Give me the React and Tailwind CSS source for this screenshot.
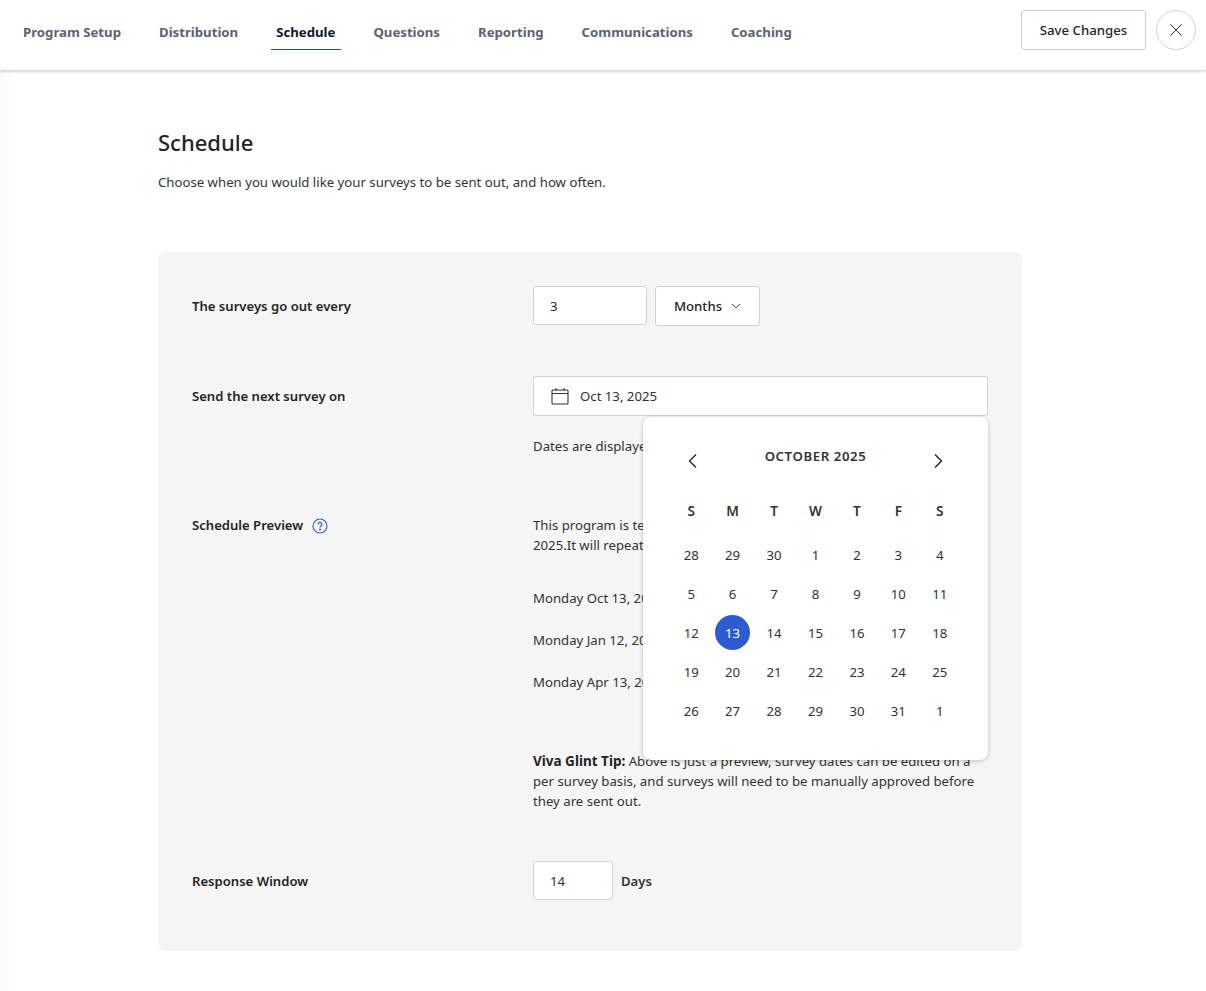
const tabs = ["Program Setup", "Distribution", "Schedule", "Questions", "Reporting", "Communications", "Coaching"];
const heads = ["S", "M", "T", "W", "T", "F", "S"];
const days = [28,29,30,1,2,3,4,5,6,7,8,9,10,11,12,13,14,15,16,17,18,19,20,21,22,23,24,25,26,27,28,29,30,31,1];

function Calendar() {
  return (
    <div className="absolute left-[110px] top-[41px] z-10 h-[343px] w-[345px] rounded-[8px] bg-white shadow-[0_1px_4px_rgba(0,0,0,0.22)]">
      <div className="flex items-start justify-between px-[44px] pt-[29px]">
        <svg width="12" height="16" viewBox="0 0 12 16" className="mt-[7px]" fill="none" stroke="#242424" strokeWidth="1.4"><path d="M9 1.5 2.5 8 9 14.5" /></svg>
        <div className="text-[13.2px] font-semibold leading-[20px] tracking-[0.6px] text-[#333]">OCTOBER 2025</div>
        <svg width="12" height="16" viewBox="0 0 12 16" className="mt-[7px]" fill="none" stroke="#242424" strokeWidth="1.4"><path d="M3 1.5 9.5 8 3 14.5" /></svg>
      </div>
      <div className="ml-[27.5px] mt-[28px] grid w-[290px] grid-cols-7">
        {heads.map((h, i) => (
          <div key={i} className="flex h-[28px] items-center justify-center text-[13.6px] font-semibold text-[#333]">{h}</div>
        ))}
      </div>
      <div className="ml-[27.5px] mt-[10px] grid w-[290px] grid-cols-7">
        {days.map((d, i) => (
          <div key={i} className="flex h-[39px] items-center justify-center">
            <span className={i === 15 ? "flex h-[35px] w-[35px] items-center justify-center rounded-full bg-[#2f5bd0] text-[13.2px] text-white" : "text-[13.2px] text-[#333]"}>{d}</span>
          </div>
        ))}
      </div>
    </div>
  );
}

export default function App() {
  return (
    <div className="relative min-h-[991px] bg-white text-[13.2px] leading-[20px] text-[#242424] font-['Noto_Sans','Open_Sans',sans-serif]">
      <div className="pointer-events-none absolute bottom-0 left-0 top-[70px] w-[16px] bg-gradient-to-r from-[#f9f9f9] to-transparent" />
      <header className="relative z-20 flex h-[70px] items-start justify-between bg-white pl-[23px] pr-[10px] pt-[10px] shadow-[0_1px_3px_rgba(0,0,0,0.25)]">
        <nav className="flex gap-[38px] pt-[12px]">
          {tabs.map((t) => (
            <div key={t} className={t === "Schedule" ? "relative text-[13.2px] font-bold text-[#111827]" : "text-[13.2px] font-bold text-[#5b6470]"}>
              {t}
              {t === "Schedule" && <span className="absolute -left-[5px] -right-[6px] top-[27px] h-px bg-[#1f4e8c]" />}
            </div>
          ))}
        </nav>
        <div className="flex items-center gap-[10px]">
          <button className="h-[40px] w-[125px] rounded-[3px] border border-[#cfcfcf] bg-white pb-[1px] text-[13.2px] font-medium text-[#242424]">Save Changes</button>
          <button className="flex h-[40px] w-[40px] items-center justify-center rounded-full border border-[#d1d1d1] bg-white">
            <svg width="14" height="14" viewBox="0 0 14 14" fill="none" stroke="#333" strokeWidth="1"><path d="M1.5 1.5l11 11M12.5 1.5l-11 11" /></svg>
          </button>
        </div>
      </header>

      <main className="relative ml-[158px] w-[864px] pt-[56px]">
        <h1 className="text-[22px] font-medium leading-[32px] text-[#242424]">Schedule</h1>
        <p className="mt-[14px] text-[#333]">Choose when you would like your surveys to be sent out, and how often.</p>

        <section className="mt-[60px] rounded-[8px] bg-[#f5f5f5] px-[34px] pb-[51px] pt-[34px]">
          <div className="flex">
            <div className="w-[341px] pt-[10px] text-[13.1px] font-semibold">The surveys go out every</div>
            <div className="flex gap-[8px]">
              <div className="flex h-[39px] w-[114px] items-center rounded-[3px] border border-[#d1d1d1] bg-white pl-[16px]">3</div>
              <div className="flex h-[40px] w-[105px] items-center justify-center gap-[9px] rounded-[3px] border border-[#d1d1d1] bg-white text-[13.2px] font-medium">
                Months
                <svg width="10" height="6" viewBox="0 0 10 6" fill="none" stroke="#555" strokeWidth="1"><path d="M1 1l4 4 4-4" /></svg>
              </div>
            </div>
          </div>

          <div className="mt-[50px] flex">
            <div className="w-[341px] pt-[10px] text-[13.1px] font-semibold">Send the next survey on</div>
            <div className="relative w-[455px]">
              <div className="flex h-[40px] items-center gap-[11px] rounded-[3px] border border-[#d1d1d1] bg-white pl-[17px]">
                <svg width="18" height="18" viewBox="0 0 18 18" fill="none" stroke="#333" strokeWidth="1.1"><rect x="1" y="3" width="16" height="14" rx="1" /><path d="M1 6.5h16M5 1v3M13 1v3" /></svg>
                <span className="text-[#333]">Oct 13, 2025</span>
              </div>
              <p className="mt-[20px] text-[#333]">Dates are displayed in your time zone.</p>
              <Calendar />
            </div>
          </div>

          <div className="mt-[59px] flex">
            <div className="flex w-[341px] items-start gap-[9px] text-[13.1px] font-semibold">
              Schedule Preview
              <svg width="16" height="16" viewBox="0 0 16 16" fill="none" stroke="#2f5bd0" strokeWidth="1.1" className="mt-[3px]">
                <circle cx="8" cy="8" r="7" />
                <path d="M6 6.4a2 2 0 1 1 3 1.7c-.7.4-1 .8-1 1.5" />
                <circle cx="8" cy="11.6" r=".5" fill="#2f5bd0" />
              </svg>
            </div>
            <div className="w-[455px] text-[#333]">
              <p>This program is tentatively scheduled to begin on Monday Oct 13,<br />2025.It will repeat every 3 months.</p>
              <p className="mt-[33px]">Monday Oct 13, 2025</p>
              <p className="mt-[22px]">Monday Jan 12, 2026</p>
              <p className="mt-[22px]">Monday Apr 13, 2026</p>
              <p className="mt-[59px]"><strong className="text-[13.5px] font-bold text-[#242424]">Viva Glint Tip:</strong> Above is just a preview, survey dates can be edited on a per survey basis, and surveys will need to be manually approved before they are sent out.</p>
            </div>
          </div>

          <div className="mt-[50px] flex items-center">
            <div className="w-[341px] text-[13.1px] font-semibold">Response Window</div>
            <div className="flex h-[39px] w-[80px] items-center rounded-[3px] border border-[#d1d1d1] bg-white pl-[16px] text-[#333]">14</div>
            <span className="ml-[8px] text-[13.1px] font-semibold text-[#333]">Days</span>
          </div>
        </section>
      </main>
    </div>
  );
}
